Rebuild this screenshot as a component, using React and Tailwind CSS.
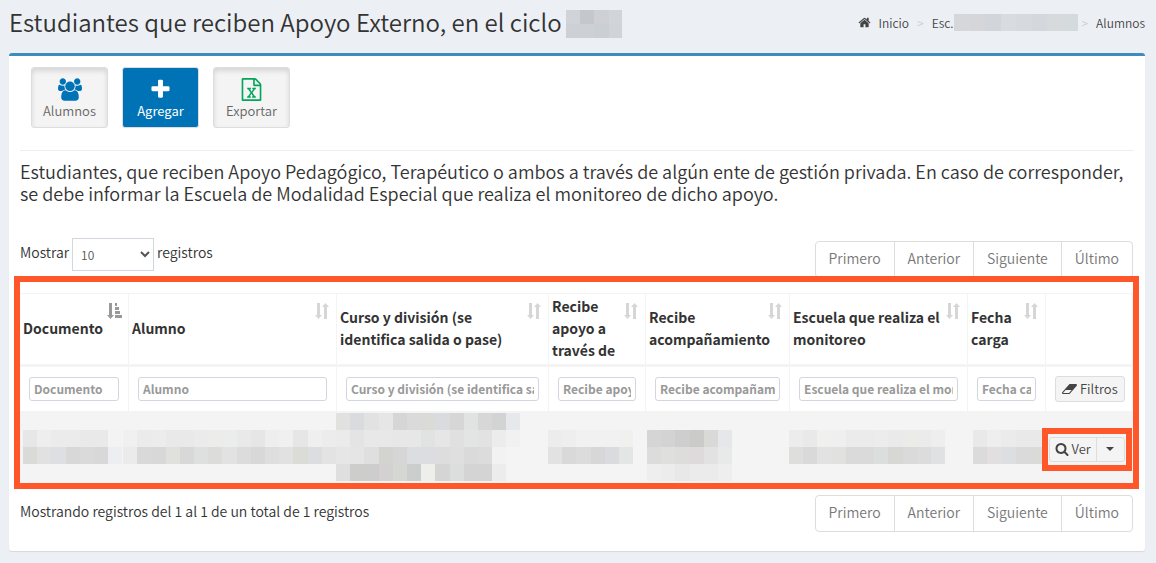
const ICONS = {
  home: ['0 0 1792 1792', 'M1472 992v480q0 26-19 45t-45 19h-384v-384h-256v384h-384q-26 0-45-19t-19-45v-480q0-1 .5-3t.5-3l575-474 575 474q1 2 1 6zm223-69l-62 74q-8 9-21 11h-3q-13 0-21-7l-692-577-692 577q-12 8-24 7-13-2-21-11l-62-74q-8-10-7-23.500t11-21.500l719-599q32-26 76-26t76 26l244 204v-195q0-14 9-23t23-9h192q14 0 23 9t9 23v408l219 182q10 8 11 21.500t-7 23.500z'],
  users: ['0 0 1920 1792', 'M593 896q-162 5-265 128h-134q-82 0-138-40.5t-56-118.500q0-353 124-353 6 0 43.500 21t97.500 42.500 119 21.500q67 0 133-23-5 37-5 66 0 139 81 256zM1664 1533q0 120-73 189.500t-194 69.500h-874q-121 0-194-69.500t-73-189.500q0-53 3.500-103.500t14-109 26.500-108.500 43-97.500 62-81 85.500-53.500 111.500-20q10 0 43 21.500t73 48 107 48 135 21.500 135-21.500 107-48 73-48 43-21.500q61 0 111.500 20t85.500 53.500 62 81 43 97.500 26.500 108.500 14 109 3.500 103.500zM640 256q0 106-75 181t-181 75-181-75-75-181 75-181 181-75 181 75 75 181zM1344 640q0 159-112.500 271.500t-271.500 112.500-271.500-112.500-112.500-271.500 112.500-271.500 271.500-112.500 271.500 112.500 112.500 271.500zM1920 865q0 78-56 118.500t-138 40.500h-134q-103-123-265-128 81-117 81-256 0-29-5-66 66 23 133 23 59 0 119-21.500t97.500-42.500 43.500-21q124 0 124 353zM1792 256q0 106-75 181t-181 75-181-75-75-181 75-181 181-75 181 75 75 181z'],
  plus: ['0 0 1792 1792', 'M1600 736v192q0 40-28 68t-68 28h-416v416q0 40-28 68t-68 28h-192q-40 0-68-28t-28-68v-416h-416q-40 0-68-28t-28-68v-192q0-40 28-68t68-28h416v-416q0-40 28-68t68-28h192q40 0 68 28t28 68v416h416q40 0 68 28t28 68z'],
  excel: ['0 0 1792 1792', 'M1596 380q28 28 48 76t20 88v1152q0 40-28 68t-68 28h-1344q-40 0-68-28t-28-68v-1600q0-40 28-68t68-28h896q40 0 88 20t76 48zm-444-244v376h376q-10-29-22-41l-313-313q-12-12-41-22zm384 1528v-1024h-416q-40 0-68-28t-28-68v-416h-768v1536h1280zm-979-234v106h281v-106h-75l103-161q5-7 10-16.500t7.500-13.500 3.500-4h2q1 4 5 10 2 4 4.500 7.500t6 8 6.500 8.500l107 161h-76v106h291v-106h-68l-192-273 195-282h67v-107h-279v107h74l-103 159q-4 7-10 16.500t-9 13.500l-2 3h-2q-1-4-5-10-6-11-17-23l-106-159h76v-107h-290v107h68l189 272-194 283h-68z'],
  search: ['0 0 1792 1792', 'M1216 832q0-185-131.500-316.500t-316.500-131.500-316.500 131.500-131.500 316.500 131.500 316.500 316.500 131.500 316.500-131.500 131.500-316.500zm512 832q0 52-38 90t-90 38q-54 0-90-38l-343-342q-179 124-399 124-143 0-273.500-55.500t-225-150-150-225-55.500-273.500 55.500-273.500 150-225 225-150 273.500-55.500 273.500 55.500 225 150 150 225 55.500 273.500q0 220-124 399l343 343q37 37 37 90z'],
  eraser: ['0 0 1920 1792', 'M896 1408l336-384h-768l-336 384h768zm1013-1077q15 34 9.500 71.500t-30.500 65.500l-896 1024q-38 44-96 44h-768q-38 0-69.500-20.500t-47.500-54.500q-15-34-9.500-71.500t30.500-65.500l896-1024q38-44 96-44h768q38 0 69.500 20.500t47.500 54.500z'],
  caret: ['0 0 8 4', 'M0 0h8L4 4z'],
  sort: ['0 0 16 16', 'M3 0h3v12h2l-3.500 4L1 12h2zM10 16h3V4h2l-3.500-4L8 4h2z'],
  sortAsc: ['0 0 16 16', 'M3 0h3v12h2l-3.500 4L1 12h2zM9 0h2v3H9zM9 4h4v3H9zM9 8h5v3H9zM9 12h7v3H9z'],
};

function Icon({ name, className }) {
  const [viewBox, d] = ICONS[name];
  return (
    <svg viewBox={viewBox} className={className} fill="currentColor" aria-hidden="true">
      <path d={d} />
    </svg>
  );
}

/* Pixelated block that hides private data. */
function Mosaic({ rows, cell = 14.2, height = 17, className }) {
  const columns = Math.max(...rows.map((row) => row.length));
  return (
    <svg
      width={columns * cell}
      height={rows.length * height}
      className={className}
      shapeRendering="crispEdges"
      aria-hidden="true"
    >
      {rows.map((row, y) =>
        row.map((color, x) =>
          color ? (
            <rect key={`${x}-${y}`} x={x * cell} y={y * height} width={cell} height={height} fill={`#${color}`} />
          ) : null
        )
      )}
    </svg>
  );
}

const px = (text) => text.split(' ');
const EMPTY = [null];

const COLUMNS = [
  {
    label: 'Documento', width: 'w-[109px]', sorted: true, offset: 'ml-[3px]',
    rows: [EMPTY, px('e7e7e7 eeeeee ebebeb ebebeb e9e9e9 e9e9e9 f3f3f3'), px('dadad8 e1e1e1 dddfe2 d8d8d8 dadada d8d8d8 eceef1'), EMPTY],
  },
  {
    label: 'Alumno', width: 'w-[208px]', offset: 'ml-[-6px]',
    rows: [
      EMPTY,
      px('f0f0f0 ebebeb ececec e9e9e9 e9e9e9 ebebeb ececea ebedec e9e9e9 e6e6e6 eeeeee f0f0f0 e6e6e6 efefef ececec'),
      px('ebebeb d9d9d9 d8d8d8 e0e0dd d8d8d8 dde0df dcdcda e2e2e2 dcdcdc d8d8d8 dedede e1e1e1 dcdcd6 dcdde1 e3e3e3'),
      EMPTY,
    ],
  },
  {
    label: 'Curso y división (se identifica salida o pase)', width: 'w-[212px]', offset: 'ml-[-1px]',
    rows: [
      px('e1e1df dadbde e2e2e2 e6e6e6 d6d6d6 dadada dadad7 dadbde d6d6d6 e0e3e1 d7d7d7 d3d3d3 e6e8eb'),
      px('ebebeb e4e4e4 e8e8e8 e8e8e8 e7e7e7 e7e7e7 e0e3e1 e6e6e6 e0e0e0 e2e5e4 e2e2e2 ececec f1f1f1'),
      px('e6e6e6 e5e5e5 dfdfdf d3d3d0 d6d6d6 dbdde1 dbdde1 dddddd dfdfdf dadada dcdcdc f2f2f2'),
      px('dfdfdf cdcdcb cdcdcd d3d2d0 d5d7d3 cccecd eeeeeb d5d5d5 dbdedd d4d4d4 d4d4d4 ececec'),
    ],
  },
  {
    label: 'Recibe apoyo a través de', width: 'w-[97px]', offset: 'ml-[-1px]',
    rows: [EMPTY, px('ececec eeeeee f1f1f1 f1f1f1 f1f1f1 f0f0ee'), px('e2e2e2 d9d9d9 dcdcdc d7d7d7 dadbde e3e6e5'), EMPTY],
  },
  {
    label: 'Recibe acompañamiento', width: 'w-[144px]', offset: 'ml-[1px]',
    rows: [EMPTY, px('d5d5d5 d3d3d3 cecece cbcbc9 d9d9d7 e5e7ea'), px('dcdcdc dfdfdd dddddb dedadc e2e2e2 e7eae9'), px('eeeeee ececec e8e8e8 ebebeb ebebeb eeeeee')],
  },
  {
    label: 'Escuela que realiza el monitoreo', width: 'w-[178px]', offset: 'ml-[-1px]',
    rows: [EMPTY, px('ececec e9e9e9 f0f0ee efefef ebebeb ebebeb ececec eaeaea ebebe9 ebebeb eeeeee'), px('dededc d9d9d9 e2e2e2 e1e1df dadada dadada dcdedd d7d7d5 dadada dcdcdc e0e1e3'), EMPTY],
  },
  {
    label: 'Fecha carga', width: 'w-[78px]', offset: 'ml-[5px]',
    rows: [EMPTY, px('e9e9e9 eeeeee ebebeb e9e9e9 e9e9e9'), px('dbdbdb e1dfe0 dddee0 dadada dadad8'), EMPTY],
  },
];

function Pagination({ label }) {
  return (
    <nav aria-label={label} className="flex overflow-hidden rounded-[4px] border border-[#ddd] text-[14px] leading-[20px] text-[#777]">
      {['Primero', 'Anterior', 'Siguiente', 'Último'].map((item, i) => (
        <a key={item} href="#" className={`px-[13px] pt-[6px] pb-[9px] ${i ? 'border-l border-[#ddd]' : ''}`}>
          {item}
        </a>
      ))}
    </nav>
  );
}

function ToolButton({ icon, label, primary, iconClass }) {
  return (
    <button
      type="button"
      className={`flex h-[61px] w-[77px] flex-col items-center rounded-[3px] border border-[#ddd] pt-[10px] text-[13px] leading-[20px] ${
        primary
          ? 'bg-[#0073b7] font-normal text-white'
          : 'bg-[#f4f4f4] text-[#666] shadow-[inset_0_3px_5px_rgba(0,0,0,0.125)]'
      }`}
    >
      <Icon name={icon} className={iconClass} />
      <span>{label}</span>
    </button>
  );
}

export default function App() {
  return (
    <div className="min-h-screen bg-[#ecf0f5] pr-[11px] pb-3 pl-[9px] font-['Noto_Sans_CJK_SC',sans-serif] text-[14px] leading-[20px] font-[350] text-[#333]">
      <header className="flex h-[53px] items-center justify-between pb-[9px]">
        <h1 className="flex items-center gap-1 text-[24px] leading-[28px]">
          Estudiantes que reciben Apoyo Externo, en el ciclo
          <Mosaic cell={14.2} height={14} className="mt-[4px]" rows={[px('d0d3d7 c4c8cd cfd0d5 d1d4d9'), px('cdd0d4 ced1d3 cbced3 d0d3d7')]} />
        </h1>
        <nav aria-label="Ruta" className="flex items-center pt-px text-[12px] text-[#444]">
          <a href="#" className="flex items-center gap-2">
            <Icon name="home" className="size-[13px]" />
            Inicio
          </a>
          <span className="px-2 text-[12px] text-[#ccc]">&gt;</span>
          <a href="#" className="flex items-center">
            Esc.
            <Mosaic
              cell={15.5}
              height={17}
              rows={[px('d5d7db d4d6da d2d5d9 d8dce0 d6dade d4d8dc d6dadd d5dadd')]}
            />
          </a>
          <span className="pr-2 pl-1 text-[12px] text-[#ccc]">&gt;</span>
          <a href="#">Alumnos</a>
        </nav>
      </header>

      <main className="rounded-[3px] border-t-3 border-[#3c8dbc] bg-white px-[11px] pt-[11px] pb-[19px] shadow-[0_1px_1px_rgba(0,0,0,0.1)]">
        <div className="flex gap-[14px] border-b border-[#eee] pb-[22px] pl-[11px]">
          <ToolButton icon="users" label="Alumnos" iconClass="h-[23px] w-[24px] text-[#0073b7]" />
          <ToolButton icon="plus" label="Agregar" primary iconClass="h-[23px] w-[23px]" />
          <ToolButton icon="excel" label="Exportar" iconClass="h-[23px] w-[23px] text-[#00a65a]" />
        </div>

        <p className="mt-[9px] text-[18px] leading-[22px]">
          Estudiantes, que reciben Apoyo Pedagógico, Terapéutico o ambos a través de algún ente de gestión privada. En caso
          de corresponder, se debe informar la Escuela de Modalidad Especial que realiza el monitoreo de dicho apoyo.
        </p>

        <div className="mt-[34px] flex items-start justify-between">
          <label className="flex items-center gap-[3px]">
            <span className="pb-[5px]">Mostrar</span>
            <select className="h-[33px] w-[82px] border border-[#d2d6de] bg-white pl-1 text-[12px] text-[#555]" defaultValue="10">
              <option>10</option>
              <option>25</option>
              <option>50</option>
            </select>
            <span className="pb-[5px]">registros</span>
          </label>
          <div className="mt-[3px] mr-[1px]">
            <Pagination label="Páginas, arriba" />
          </div>
        </div>

        <div className="relative mt-[15px] mr-[1px] ml-[-1px]">
          <table className="w-full table-fixed border-collapse">
            <thead>
              <tr className="h-[72px] border-t border-b-3 border-[#f4f4f4]">
                {COLUMNS.map((column) => (
                  <th
                    key={column.label}
                    className={`border-x border-[#f4f4f4] p-0 text-left align-middle leading-[22px] font-bold ${column.width}`}
                  >
                    <div className="relative flex h-[70px] items-center pr-[22px] pb-[2px] pl-[3px]">
                      <span>{column.label}</span>
                      <Icon
                        name={column.sorted ? 'sortAsc' : 'sort'}
                        className={`absolute top-[9px] right-[6px] size-[16px] ${column.sorted ? 'text-[#999]' : 'text-[#d6d6d6]'}`}
                      />
                    </div>
                  </th>
                ))}
                <th className="w-[87px] border-x border-[#f4f4f4] p-0" />
              </tr>
              <tr className="h-[45px]">
                {COLUMNS.map((column) => (
                  <td key={column.label} className="border-x border-[#f4f4f4] px-[9px] py-0">
                    <input
                      type="text"
                      aria-label={column.label}
                      placeholder={column.label}
                      className="block h-[24px] w-full rounded-[3px] border border-[#d2d6de] bg-white px-1 text-[12px] font-bold placeholder:text-[#999]"
                    />
                  </td>
                ))}
                <td className="border-x border-[#f4f4f4] px-[9px] py-0">
                  <button
                    type="button"
                    className="flex h-[26px] items-center gap-[3px] rounded-[3px] border border-[#ddd] bg-[#f4f4f4] px-[6px] text-[13px] text-[#444]"
                  >
                    <Icon name="eraser" className="h-[14px] w-[15px]" />
                    Filtros
                  </button>
                </td>
              </tr>
            </thead>
            <tbody>
              <tr className="h-[72px] bg-[#f4f4f4]">
                {COLUMNS.map((column) => (
                  <td key={column.label} className="p-0 align-middle">
                    <Mosaic rows={column.rows} className={column.offset} />
                  </td>
                ))}
                <td className="p-0 pt-[5px]">
                  <div className="relative ml-[3px] flex h-[25px] w-[76px] rounded-[3px] border border-[#ddd] text-[13px] text-[#444]">
                    <button type="button" className="flex flex-1 items-center gap-[3px] pl-[5px]">
                      <Icon name="search" className="size-[14px]" />
                      Ver
                    </button>
                    <button type="button" aria-label="Más acciones" className="flex w-[28px] items-center justify-center border-l border-[#ddd]">
                      <Icon name="caret" className="h-[4px] w-[8px]" />
                    </button>
                    <div className="pointer-events-none absolute -inset-x-[8px] -inset-y-[10px] border-6 border-[#ff5729]" />
                  </div>
                </td>
              </tr>
            </tbody>
          </table>
          <div className="pointer-events-none absolute -top-[17px] -right-[6px] -bottom-[6px] -left-[5px] border-6 border-[#ff5729]" />
        </div>

        <div className="mt-[12px] flex items-start justify-between">
          <p className="mt-[6px]">Mostrando registros del 1 al 1 de un total de 1 registros</p>
          <div className="mr-[1px]">
            <Pagination label="Páginas, abajo" />
          </div>
        </div>
      </main>
    </div>
  );
}
